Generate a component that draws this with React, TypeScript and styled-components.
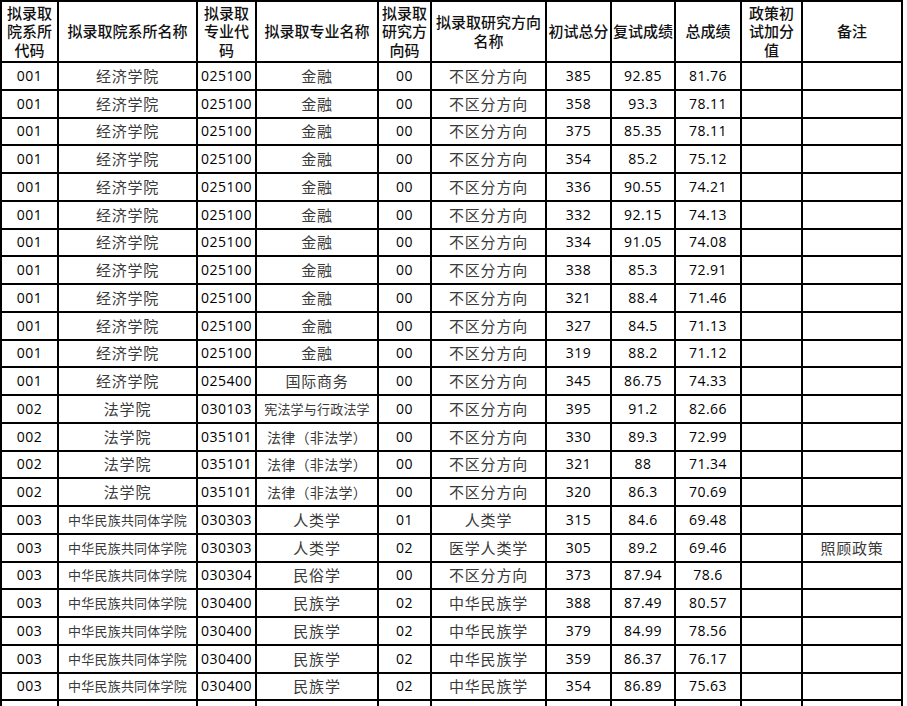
import styled, { createGlobalStyle } from "styled-components";

const GlobalStyle = createGlobalStyle`
  html, body {
    margin: 0;
    padding: 0;
    background: #ffffff;
  }
`;

type Admit = {
  dept: string;
  deptName: string;
  major: string;
  majorName: string;
  dir: string;
  dirName: string;
  first: string;
  second: string;
  total: string;
  bonus?: string;
  note?: string;
};

const rows: Admit[] = [
  { dept: "001", deptName: "经济学院", major: "025100", majorName: "金融", dir: "00", dirName: "不区分方向", first: "385", second: "92.85", total: "81.76" },
  { dept: "001", deptName: "经济学院", major: "025100", majorName: "金融", dir: "00", dirName: "不区分方向", first: "358", second: "93.3", total: "78.11" },
  { dept: "001", deptName: "经济学院", major: "025100", majorName: "金融", dir: "00", dirName: "不区分方向", first: "375", second: "85.35", total: "78.11" },
  { dept: "001", deptName: "经济学院", major: "025100", majorName: "金融", dir: "00", dirName: "不区分方向", first: "354", second: "85.2", total: "75.12" },
  { dept: "001", deptName: "经济学院", major: "025100", majorName: "金融", dir: "00", dirName: "不区分方向", first: "336", second: "90.55", total: "74.21" },
  { dept: "001", deptName: "经济学院", major: "025100", majorName: "金融", dir: "00", dirName: "不区分方向", first: "332", second: "92.15", total: "74.13" },
  { dept: "001", deptName: "经济学院", major: "025100", majorName: "金融", dir: "00", dirName: "不区分方向", first: "334", second: "91.05", total: "74.08" },
  { dept: "001", deptName: "经济学院", major: "025100", majorName: "金融", dir: "00", dirName: "不区分方向", first: "338", second: "85.3", total: "72.91" },
  { dept: "001", deptName: "经济学院", major: "025100", majorName: "金融", dir: "00", dirName: "不区分方向", first: "321", second: "88.4", total: "71.46" },
  { dept: "001", deptName: "经济学院", major: "025100", majorName: "金融", dir: "00", dirName: "不区分方向", first: "327", second: "84.5", total: "71.13" },
  { dept: "001", deptName: "经济学院", major: "025100", majorName: "金融", dir: "00", dirName: "不区分方向", first: "319", second: "88.2", total: "71.12" },
  { dept: "001", deptName: "经济学院", major: "025400", majorName: "国际商务", dir: "00", dirName: "不区分方向", first: "345", second: "86.75", total: "74.33" },
  { dept: "002", deptName: "法学院", major: "030103", majorName: "宪法学与行政法学", dir: "00", dirName: "不区分方向", first: "395", second: "91.2", total: "82.66" },
  { dept: "002", deptName: "法学院", major: "035101", majorName: "法律（非法学）", dir: "00", dirName: "不区分方向", first: "330", second: "89.3", total: "72.99" },
  { dept: "002", deptName: "法学院", major: "035101", majorName: "法律（非法学）", dir: "00", dirName: "不区分方向", first: "321", second: "88", total: "71.34" },
  { dept: "002", deptName: "法学院", major: "035101", majorName: "法律（非法学）", dir: "00", dirName: "不区分方向", first: "320", second: "86.3", total: "70.69" },
  { dept: "003", deptName: "中华民族共同体学院", major: "030303", majorName: "人类学", dir: "01", dirName: "人类学", first: "315", second: "84.6", total: "69.48" },
  { dept: "003", deptName: "中华民族共同体学院", major: "030303", majorName: "人类学", dir: "02", dirName: "医学人类学", first: "305", second: "89.2", total: "69.46", note: "照顾政策" },
  { dept: "003", deptName: "中华民族共同体学院", major: "030304", majorName: "民俗学", dir: "00", dirName: "不区分方向", first: "373", second: "87.94", total: "78.6" },
  { dept: "003", deptName: "中华民族共同体学院", major: "030400", majorName: "民族学", dir: "02", dirName: "中华民族学", first: "388", second: "87.49", total: "80.57" },
  { dept: "003", deptName: "中华民族共同体学院", major: "030400", majorName: "民族学", dir: "02", dirName: "中华民族学", first: "379", second: "84.99", total: "78.56" },
  { dept: "003", deptName: "中华民族共同体学院", major: "030400", majorName: "民族学", dir: "02", dirName: "中华民族学", first: "359", second: "86.37", total: "76.17" },
  { dept: "003", deptName: "中华民族共同体学院", major: "030400", majorName: "民族学", dir: "02", dirName: "中华民族学", first: "354", second: "86.89", total: "75.63" },
];

const widths = [57, 139, 59, 122, 53, 115, 65, 64, 66, 61, 100];

type Kind = "num" | "text" | "mid" | "small";

const sizes: Record<Kind, string> = { num: "14px", text: "15px", mid: "14px", small: "13px" };
const spacing: Record<Kind, string> = { num: "0.5px", text: "0.8px", mid: "0.3px", small: "0.2px" };

const Sheet = styled.table`
  border-collapse: collapse;
  table-layout: fixed;
  width: 901px;
  margin: 0;
  border: 2px solid #000;
`;

const Col = styled.col<{ $w: number }>`
  width: ${(p) => p.$w}px;
`;

const HeadRow = styled.tr`
  height: 61px;
`;

const Th = styled.th`
  border: 2px solid #000;
  padding: 0;
  font-family: "Noto Sans CJK SC", "Noto Sans", sans-serif;
  font-size: 15px;
  font-weight: 500;
  line-height: 18.5px;
  color: #111;
  text-align: center;
  vertical-align: middle;
  white-space: nowrap;
  overflow: hidden;
`;

const BodyRow = styled.tr`
  height: 27.75px;
`;

const Cell = styled.td<{ $kind?: Kind }>`
  border: 2px solid #000;
  padding: 0;
  height: 25px;
  text-align: center;
  vertical-align: middle;
  white-space: nowrap;
  overflow: hidden;
  line-height: 20px;
  font-family: ${(p) =>
    p.$kind === "num"
      ? `"Open Sans", "Liberation Sans", sans-serif`
      : `"Noto Sans CJK SC", "Noto Sans", sans-serif`};
  font-size: ${(p) => sizes[p.$kind ?? "text"]};
  letter-spacing: ${(p) => spacing[p.$kind ?? "text"]};
  color: ${(p) => (p.$kind === "num" ? "#000" : "#3a3a3a")};
  font-weight: 400;
`;

function textKind(s: string): Kind {
  if (s.length >= 8) return "small";
  if (s.length === 7) return "mid";
  return "text";
}

export default function App() {
  return (
    <>
      <GlobalStyle />
      <Sheet>
        <colgroup>
          {widths.map((w, i) => (
            <Col key={i} $w={w} />
          ))}
        </colgroup>
        <thead>
          <HeadRow>
            <Th>拟录取<br />院系所<br />代码</Th>
            <Th>拟录取院系所名称</Th>
            <Th>拟录取<br />专业代<br />码</Th>
            <Th>拟录取专业名称</Th>
            <Th>拟录取<br />研究方<br />向码</Th>
            <Th>拟录取研究方向<br />名称</Th>
            <Th>初试总分</Th>
            <Th>复试成绩</Th>
            <Th>总成绩</Th>
            <Th>政策初<br />试加分<br />值</Th>
            <Th>备注</Th>
          </HeadRow>
        </thead>
        <tbody>
          {rows.map((r, i) => (
            <BodyRow key={i}>
              <Cell $kind="num">{r.dept}</Cell>
              <Cell $kind={textKind(r.deptName)}>{r.deptName}</Cell>
              <Cell $kind="num">{r.major}</Cell>
              <Cell $kind={textKind(r.majorName)}>{r.majorName}</Cell>
              <Cell $kind="num">{r.dir}</Cell>
              <Cell $kind="text">{r.dirName}</Cell>
              <Cell $kind="num">{r.first}</Cell>
              <Cell $kind="num">{r.second}</Cell>
              <Cell $kind="num">{r.total}</Cell>
              <Cell $kind="num">{r.bonus ?? ""}</Cell>
              <Cell $kind="text">{r.note ?? ""}</Cell>
            </BodyRow>
          ))}
          <BodyRow>
            {widths.map((_, i) => (
              <Cell key={i} />
            ))}
          </BodyRow>
        </tbody>
      </Sheet>
    </>
  );
}
